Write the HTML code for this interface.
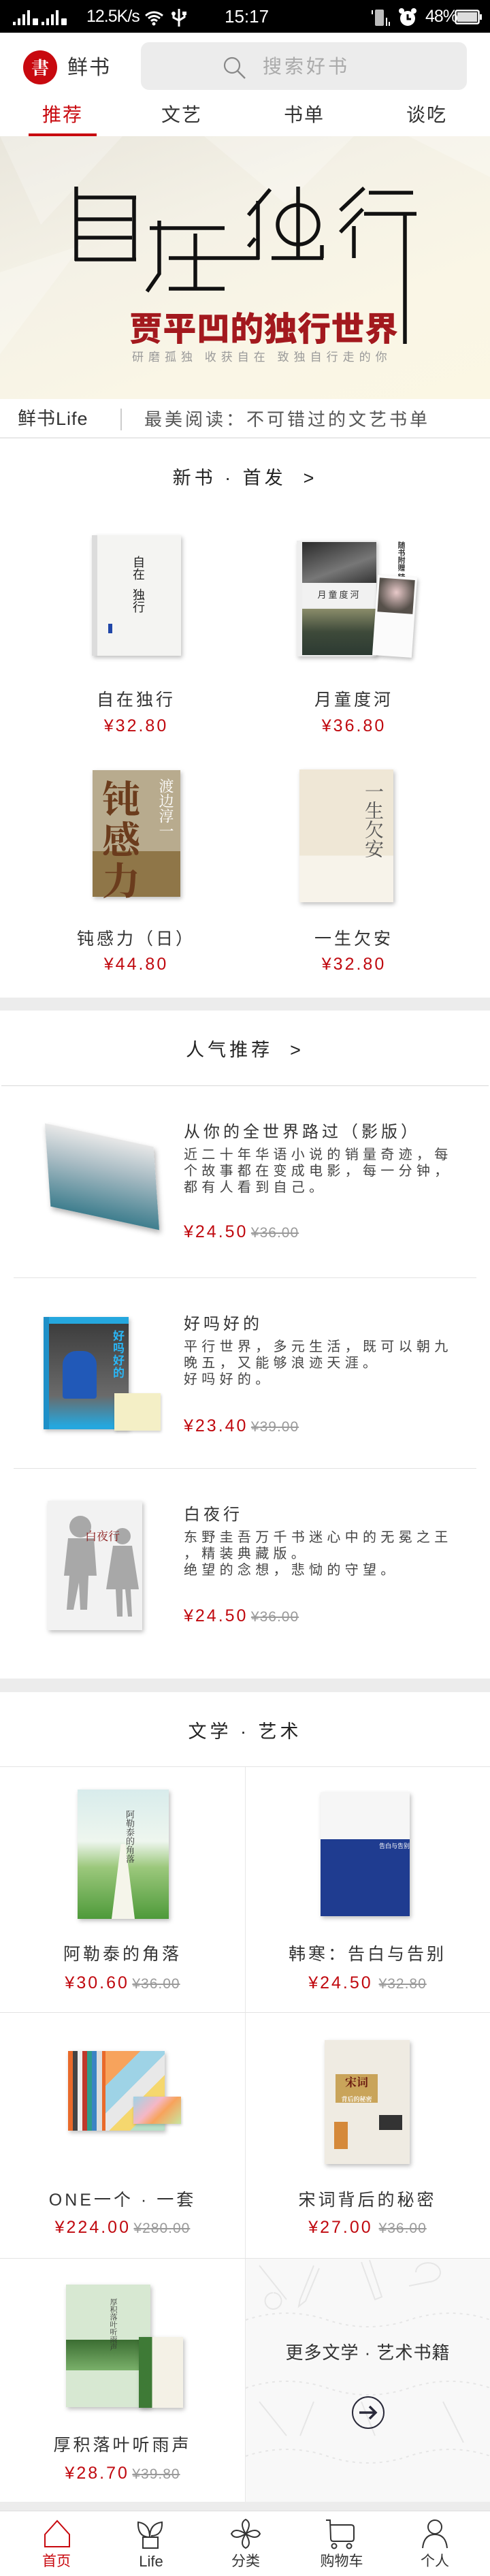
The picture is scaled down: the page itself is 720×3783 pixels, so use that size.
<!DOCTYPE html>
<html><head><meta charset="utf-8">
<style>
*{margin:0;padding:0;box-sizing:border-box}
body{width:720px;height:3783px;position:relative;background:#fff;font-family:"Liberation Sans","Noto Sans CJK SC",sans-serif;color:#333;overflow:hidden}
.a{position:absolute}
.c{position:absolute;text-align:center;white-space:nowrap}
.t{font-size:25px;letter-spacing:4px;color:#333;line-height:30px}
.p{font-size:25px;letter-spacing:3px;color:#c0090f;line-height:30px}
.o{font-size:21px;letter-spacing:1px;color:#9a9a9a;text-decoration:line-through}
.band{position:absolute;left:0;width:720px;background:#ececec}
.hl{position:absolute;height:1px;background:#e3e3e3}
.sh{font-size:27px;letter-spacing:5px;color:#222;line-height:32px}
.it{position:absolute;left:270px;width:410px}
.it .ti{font-size:24px;letter-spacing:5px;color:#333;line-height:30px;white-space:nowrap}
.it .de{font-size:20px;letter-spacing:6.3px;color:#444;line-height:24px;margin-top:6px}
.it .pr{position:absolute;left:0;white-space:nowrap}
.book{position:absolute;box-shadow:2px 3px 6px rgba(0,0,0,.25)}
</style></head><body>

<div class="a" style="left:0;top:0;width:720px;height:48px;background:#000"></div>
<svg class="a" style="left:18px;top:10px" width="110" height="30" viewBox="0 0 110 30">
<g fill="#fff"><rect x="1" y="22" width="4" height="5"/><rect x="8" y="17" width="4" height="10"/><rect x="15" y="11" width="4" height="16"/><rect x="22" y="5" width="4" height="22"/>
<rect x="30" y="17" width="8" height="10" rx="1"/>
<rect x="43" y="22" width="4" height="5"/><rect x="50" y="17" width="4" height="10"/><rect x="57" y="11" width="4" height="16"/><rect x="64" y="5" width="4" height="22"/>
<rect x="72" y="17" width="8" height="10" rx="1"/></g></svg>
<div class="a" style="left:127px;top:8px;color:#fff;font-size:25px;letter-spacing:-1px;line-height:32px">12.5K/s</div>
<svg class="a" style="left:212px;top:14px" width="30" height="24" viewBox="0 0 30 24"><g fill="none" stroke="#fff" stroke-width="3"><path d="M2 9 Q14 -1 27 9"/><path d="M6 13 Q14 6 23 13"/><path d="M10 17 Q14 13 19 17"/></g><circle cx="14" cy="21" r="2.5" fill="#fff"/></svg>
<svg class="a" style="left:252px;top:11px" width="22" height="30" viewBox="0 0 22 30"><g stroke="#fff" stroke-width="3" fill="none"><path d="M11 2 V28"/><path d="M3 10 V15 L11 19 L19 14 V9"/></g><rect x="16" y="6" width="6" height="5" fill="#fff"/><circle cx="3" cy="9" r="3" fill="#fff"/></svg>
<div class="a" style="left:330px;top:8px;color:#fff;font-size:26px;line-height:32px">15:17</div>
<svg class="a" style="left:544px;top:12px" width="32" height="28" viewBox="0 0 32 28"><rect x="7" y="2" width="13" height="24" rx="2" fill="#bbb"/><rect x="2" y="3" width="2" height="6" fill="#fff"/><rect x="23" y="14" width="2" height="12" fill="#fff"/><rect x="27" y="20" width="2" height="6" fill="#fff"/></svg>
<svg class="a" style="left:584px;top:11px" width="30" height="30" viewBox="0 0 30 30"><circle cx="15" cy="16" r="11" fill="#fff"/><path d="M15 10 V17 H20" stroke="#000" stroke-width="3" fill="none"/><circle cx="6" cy="5" r="4" fill="#fff"/><circle cx="24" cy="5" r="4" fill="#fff"/></svg>
<div class="a" style="left:625px;top:8px;color:#fff;font-size:25px;letter-spacing:-1px;line-height:32px">48%</div>
<svg class="a" style="left:668px;top:14px" width="42" height="22" viewBox="0 0 42 22"><rect x="1.5" y="1.5" width="34" height="19" rx="2" fill="none" stroke="#fff" stroke-width="2.5"/><rect x="4" y="4" width="29" height="14" fill="#ddd"/><rect x="37" y="7" width="3" height="8" fill="#fff"/></svg>

<div class="a" style="left:34px;top:74px;width:50px;height:50px;border-radius:50%;background:#c8090f;color:#fff;font-size:26px;line-height:50px;text-align:center;font-family:'Noto Serif CJK SC',serif;font-weight:bold">書</div>
<div class="a" style="left:99px;top:82px;font-size:30px;line-height:36px;color:#333;letter-spacing:2px">鲜书</div>
<div class="a" style="left:207px;top:62px;width:479px;height:70px;border-radius:12px;background:#ececec"></div>
<svg class="a" style="left:327px;top:82px" width="36" height="36" viewBox="0 0 36 36"><circle cx="14" cy="14" r="11" fill="none" stroke="#888" stroke-width="2.2"/><path d="M22 22 L33 33" stroke="#888" stroke-width="2.4"/></svg>
<div class="a" style="left:386px;top:80px;font-size:28px;line-height:36px;color:#aaa;letter-spacing:4px">搜索好书</div>

<div class="c" style="left:42px;width:100px;top:152px;font-size:28px;line-height:34px;color:#c8090f;letter-spacing:2px">推荐</div>
<div class="c" style="left:217px;width:100px;top:152px;font-size:28px;line-height:34px;color:#333;letter-spacing:2px">文艺</div>
<div class="c" style="left:397px;width:100px;top:152px;font-size:28px;line-height:34px;color:#333;letter-spacing:2px">书单</div>
<div class="c" style="left:577px;width:100px;top:152px;font-size:28px;line-height:34px;color:#333;letter-spacing:2px">谈吃</div>
<div class="a" style="left:42px;top:196px;width:100px;height:4px;background:#c8090f"></div>

<div class="a" style="left:0;top:200px;width:720px;height:386px;background:linear-gradient(160deg,#e9e6dc 0%,#f4f1e6 35%,#faf6e6 70%,#fbf7e4 100%)"></div>
<svg class="a" style="left:0;top:200px" width="720" height="386" viewBox="0 200 720 386">
<g fill="rgba(255,255,255,.25)"><polygon points="0,200 180,200 60,330"/><polygon points="300,200 520,200 420,300"/><polygon points="600,200 720,260 720,200"/><polygon points="0,400 120,360 0,520"/></g>
<g stroke="#111" stroke-width="5.5" fill="none" stroke-linecap="butt">
<path d="M112 274 V383 M110 290 H200 M197 290 V383 M112 322 H194 M112 349 H194 M110 381 H200"/>
<path d="M220 335 H330 M234 324 V402 L216 428 M248 379 H381 M287 343 V425 M248 424 H330"/>
<path d="M397 278 L365 316 M379 295 V381 M375 350 L365 362"/>
<ellipse cx="438" cy="330" rx="30" ry="29"/>
<path d="M438 274 V379 M399 379 H475 M473 360 V379"/>
<path d="M535 276 L500 309 M533 307 L500 341 M520 332 V379 M542 283 H607 M535 314 H612 M595 314 V505"/>
</g>
<text x="190" y="500" font-family="Noto Sans CJK SC, sans-serif" font-weight="900" font-size="49" fill="#a3191e" textLength="395">贾平凹的独行世界</text>
<text x="194" y="530" font-family="Noto Sans CJK SC, sans-serif" font-size="17" fill="#999" letter-spacing="7">研磨孤独  收获自在  致独自行走的你</text>
</svg>

<div class="a" style="left:0;top:586px;width:720px;height:58px;border-bottom:2px solid #e8e8e8;background:#fff"></div>
<div class="a" style="left:26px;top:599px;font-size:27px;line-height:32px;color:#333;letter-spacing:1px">鲜书Life</div>
<div class="a" style="left:177px;top:600px;width:2px;height:32px;background:#ccc"></div>
<div class="a" style="left:212px;top:600px;font-size:26px;line-height:32px;color:#555;letter-spacing:4px">最美阅读：不可错过的文艺书单</div>

<div class="c sh" style="left:0;width:720px;top:686px">新书 · 首发 &nbsp;&gt;</div>

<div class="book" style="left:135px;top:786px;width:131px;height:177px;background:linear-gradient(90deg,#dcdcdc 0 6%,#f4f4f2 6%)">
<div class="a" style="left:58px;top:30px;font-size:18px;line-height:20px;color:#222;writing-mode:vertical-rl">自在</div>
<div class="a" style="left:58px;top:78px;font-size:18px;line-height:20px;color:#222;writing-mode:vertical-rl">独行</div>
<div class="a" style="left:24px;top:130px;width:6px;height:14px;background:#2046a8"></div></div>
<div class="book" style="left:436px;top:794px;width:117px;height:170px;background:#eee">
<div class="a" style="left:8px;top:2px;width:109px;height:60px;background:linear-gradient(160deg,#2a2a2a,#777 60%,#333)"></div>
<div class="a" style="left:8px;top:62px;width:109px;height:36px;background:#f1f1f1;font-size:13px;line-height:36px;text-align:center;color:#333;letter-spacing:3px">月童度河</div>
<div class="a" style="left:8px;top:100px;width:109px;height:68px;background:linear-gradient(180deg,#8a8c6a,#3e4a3a 50%,#2c3a32)"></div></div>
<div class="a" style="left:583px;top:795px;font-size:11px;line-height:12px;color:#333;writing-mode:vertical-rl;font-weight:bold">随书附赠 精美书签</div>
<div class="book" style="left:551px;top:846px;width:58px;height:118px;background:#fbfbfb;transform:rotate(4deg)">
<div class="a" style="left:3px;top:4px;width:52px;height:50px;background:radial-gradient(circle at 50% 40%,#e8c9c9,#56504a 70%)"></div></div>

<div class="c t" style="left:100px;width:200px;top:1013px">自在独行</div>
<div class="c p" style="left:100px;width:200px;top:1051px">¥32.80</div>
<div class="c t" style="left:420px;width:200px;top:1013px">月童度河</div>
<div class="c p" style="left:420px;width:200px;top:1051px">¥36.80</div>

<div class="book" style="left:136px;top:1131px;width:129px;height:186px;background:linear-gradient(180deg,#b8ab8e 0 64%,#8f7648 64%)">
<div class="a" style="left:14px;top:10px;font-size:56px;line-height:60px;color:#6b3c1d;font-weight:bold;width:60px;font-family:'Noto Serif CJK SC',serif">钝感力</div>
<div class="a" style="left:96px;top:12px;font-size:22px;line-height:24px;color:#fff;writing-mode:vertical-rl;font-family:'Noto Serif CJK SC',serif">渡边淳一</div></div>
<div class="book" style="left:440px;top:1130px;width:138px;height:195px;background:linear-gradient(180deg,#efe7d6 0 65%,#f7f3ea 65%)">
<div class="a" style="left:94px;top:18px;font-size:28px;line-height:32px;color:#555;writing-mode:vertical-rl;font-family:'Noto Serif CJK SC',serif">一生欠安</div></div>

<div class="c t" style="left:100px;width:200px;top:1364px">钝感力（日）</div>
<div class="c p" style="left:100px;width:200px;top:1401px">¥44.80</div>
<div class="c t" style="left:420px;width:200px;top:1364px">一生欠安</div>
<div class="c p" style="left:420px;width:200px;top:1401px">¥32.80</div>

<div class="band" style="top:1465px;height:19px"></div>
<div class="c sh" style="left:0;width:720px;top:1526px">人气推荐 &nbsp;&gt;</div>
<div class="hl" style="left:2px;width:716px;top:1594px;background:#d8d8d8"></div>

<div class="a" style="left:70px;top:1668px;width:160px;height:120px;background:linear-gradient(180deg,#e8e8e8,#a9bcc4 40%,#3f7e8e);transform:skewY(16deg) rotate(-4deg);box-shadow:2px 4px 8px rgba(0,0,0,.3)"></div>
<div class="it" style="top:1648px"><div class="ti">从你的全世界路过（影版）</div>
<div class="de">近二十年华语小说的销量奇迹，每个故事都在变成电影，每一分钟，都有人看到自己。</div>
<div class="pr" style="top:146px"><span class="p">¥24.50</span> <span class="o">¥36.00</span></div></div>
<div class="hl" style="left:20px;width:680px;top:1876px"></div>

<div class="book" style="left:64px;top:1934px;width:125px;height:165px;background:linear-gradient(180deg,#25a7de 0 6%,#3d3d3d 6%,#6a6a6a 70%,#25a7de 97%);border-left:8px solid #1e90c8">
<div class="a" style="left:94px;top:20px;font-size:17px;line-height:18px;color:#29b6f6;width:20px;font-weight:bold">好吗好的</div>
<div class="a" style="left:20px;top:50px;width:50px;height:70px;background:#2159b8;border-radius:20px 20px 4px 4px"></div></div>
<div class="a" style="left:168px;top:2046px;width:68px;height:55px;background:#f4efc6;box-shadow:1px 2px 4px rgba(0,0,0,.2)"></div>
<div class="it" style="top:1930px"><div class="ti">好吗好的</div>
<div class="de">平行世界，多元生活，既可以朝九晚五，又能够浪迹天涯。<br>好吗好的。</div>
<div class="pr" style="top:149px"><span class="p">¥23.40</span> <span class="o">¥39.00</span></div></div>
<div class="hl" style="left:20px;width:680px;top:2156px"></div>

<div class="book" style="left:70px;top:2204px;width:139px;height:190px;background:#f2f2f2">
<svg class="a" style="left:10px;top:10px" width="125" height="170" viewBox="0 0 125 170"><g fill="#a8a8a8"><circle cx="38" cy="28" r="16"/><path d="M20 45 H58 L62 100 L50 100 L48 150 L38 150 L36 110 L28 150 L18 150 L22 100 L14 100 Z"/><circle cx="100" cy="42" r="12"/><path d="M86 56 H114 L124 120 H76 Z M90 120 L92 160 H100 L100 120 M104 120 L108 160 H114 L112 120"/></g></svg>
<div class="a" style="left:55px;top:38px;font-size:17px;color:#8a1a1a;font-family:'Noto Serif CJK SC',serif">白夜行</div></div>
<div class="it" style="top:2210px"><div class="ti">白夜行</div>
<div class="de">东野圭吾万千书迷心中的无冕之王<br>，精装典藏版。<br>绝望的念想，悲恸的守望。</div>
<div class="pr" style="top:148px"><span class="p">¥24.50</span> <span class="o">¥36.00</span></div></div>

<div class="band" style="top:2465px;height:20px"></div>
<div class="c sh" style="left:0;width:720px;top:2527px">文学 · 艺术</div>
<div class="hl" style="left:0;width:720px;top:2594px"></div>
<div class="a" style="left:360px;top:2595px;width:1px;height:1080px;background:#e8e8e8"></div>
<div class="hl" style="left:0;width:720px;top:2955px"></div>
<div class="hl" style="left:0;width:720px;top:3316px"></div>

<div class="book" style="left:114px;top:2628px;width:134px;height:190px;background:linear-gradient(180deg,#d8ecec 0,#eef6ee 40%,#9cc87c 60%,#4e9a3a 100%)">
<div class="a" style="left:50px;top:80px;width:34px;height:110px;background:#f5f5ea;clip-path:polygon(40% 0,60% 0,100% 100%,0 100%)"></div>
<div class="a" style="left:70px;top:30px;font-size:13px;line-height:14px;color:#333;writing-mode:vertical-rl;font-family:'Noto Serif CJK SC',serif">阿勒泰的角落</div></div>
<div class="book" style="left:471px;top:2632px;width:131px;height:182px;background:linear-gradient(180deg,#f6f6f6 0 38%,#1f3c90 38%)">
<div class="a" style="left:86px;top:72px;font-size:9px;color:#fff">告白与告别</div></div>
<div class="c t" style="left:40px;width:280px;top:2855px">阿勒泰的角落</div>
<div class="c" style="left:40px;width:280px;top:2897px"><span class="p">¥30.60</span> <span class="o">¥36.00</span></div>
<div class="c t" style="left:400px;width:280px;top:2855px">韩寒：告白与告别</div>
<div class="c" style="left:400px;width:280px;top:2897px"><span class="p">¥24.50</span> &nbsp;<span class="o">¥32.80</span></div>

<div class="a" style="left:100px;top:3012px;width:142px;height:117px;background:repeating-linear-gradient(90deg,#e96a2a 0 7px,#444 7px 14px,#eee 14px 21px,#c0392b 21px 28px,#2e9c8a 28px 35px,#3b84c4 35px 42px,#ddd 42px 50px);box-shadow:2px 3px 6px rgba(0,0,0,.25)"></div>
<div class="a" style="left:155px;top:3012px;width:87px;height:117px;background:linear-gradient(135deg,#f7a35c 0 25%,#9ed3e6 25% 45%,#e8e8e8 45% 60%,#f5d76e 60% 75%,#b8e0c8 75%)"></div>
<div class="a" style="left:196px;top:3079px;width:70px;height:40px;background:linear-gradient(135deg,#9ed3e6,#f5b7c5 40%,#f7a35c 60%,#c8e6a0);box-shadow:1px 2px 4px rgba(0,0,0,.2)"></div>
<div class="book" style="left:477px;top:2996px;width:125px;height:182px;background:#efebe2">
<div class="a" style="left:16px;top:50px;width:62px;height:42px;background:#c9a45a;font-size:17px;line-height:22px;color:#6b1a10;text-align:center;font-weight:bold;font-family:'Noto Serif CJK SC',serif">宋词<br><span style="font-size:9px;color:#fff">背后的秘密</span></div>
<div class="a" style="left:14px;top:120px;width:20px;height:40px;background:#d5893a"></div>
<div class="a" style="left:80px;top:110px;width:34px;height:22px;background:#333"></div></div>
<div class="c t" style="left:40px;width:280px;top:3216px">ONE一个 · 一套</div>
<div class="c" style="left:40px;width:280px;top:3256px"><span class="p">¥224.00</span> <span class="o">¥280.00</span></div>
<div class="c t" style="left:400px;width:280px;top:3216px">宋词背后的秘密</div>
<div class="c" style="left:400px;width:280px;top:3256px"><span class="p">¥27.00</span> &nbsp;<span class="o">¥36.00</span></div>

<div class="book" style="left:97px;top:3355px;width:124px;height:180px;background:linear-gradient(180deg,#d7e8d2 0 45%,#3b6d32 45%,#7ab06a 70%,#d7e8d2 70%)">
<div class="a" style="left:64px;top:20px;font-size:11px;line-height:12px;color:#333;writing-mode:vertical-rl;font-family:'Noto Serif CJK SC',serif">厚积落叶听雨声</div></div>
<div class="book" style="left:204px;top:3432px;width:65px;height:104px;background:linear-gradient(90deg,#3e7a36 0 30%,#f4f1e6 30%)"></div>
<div class="c t" style="left:40px;width:280px;top:3576px">厚积落叶听雨声</div>
<div class="c" style="left:40px;width:280px;top:3617px"><span class="p">¥28.70</span> <span class="o">¥39.80</span></div>

<div class="a" style="left:361px;top:3317px;width:359px;height:357px;background:#f8f8f8"></div>
<svg class="a" style="left:361px;top:3317px" width="359" height="357" viewBox="0 0 359 357"><g fill="none" stroke="#e6e6e6" stroke-width="2">
<path d="M20 10 L60 60 M40 50 a12 12 0 1 0 1 0"/><path d="M100 10 L80 60 L78 70 L88 62 L108 14"/><path d="M170 5 L190 60 L200 56 L182 2"/><path d="M250 20 a18 14 0 1 1 20 14 L240 40"/>
<path d="M0 90 Q60 70 120 90 T240 90 T360 90" stroke-dasharray="4 6"/><path d="M0 190 Q60 170 120 190 T240 190 T360 190" stroke-dasharray="4 6"/><path d="M0 290 Q60 270 120 290 T240 290 T360 290" stroke-dasharray="4 6"/>
<path d="M20 210 L60 260 M100 210 L80 260 M170 210 L190 260 M290 210 L320 270"/></g></svg>
<div class="c" style="left:361px;width:359px;top:3438px;font-size:26px;line-height:34px;color:#333;letter-spacing:1px">更多文学 · 艺术书籍</div>
<svg class="a" style="left:516px;top:3518px" width="50" height="50" viewBox="0 0 50 50"><circle cx="25" cy="25" r="23" fill="none" stroke="#2a2a3a" stroke-width="2"/><path d="M12 25 H36 M27 16 L36 25 L27 34" fill="none" stroke="#2a2a3a" stroke-width="3.5"/></svg>

<div class="band" style="top:3674px;height:13px"></div>
<div class="a" style="left:0;top:3687px;width:720px;height:96px;background:#fff;border-top:1px solid #ddd"></div>
<svg class="a" style="left:60px;top:3700px" width="48" height="44" viewBox="0 0 48 44"><path d="M6 22 L24 2 L42 22 V40 H6 Z" fill="none" stroke="#c8090f" stroke-width="2"/></svg>
<svg class="a" style="left:198px;top:3700px" width="48" height="44" viewBox="0 0 48 44"><g fill="none" stroke="#333" stroke-width="2"><path d="M22 26 Q4 26 5 4 Q22 6 22 26 Q22 6 40 4 Q41 24 24 24"/><rect x="12" y="26" width="22" height="16"/></g></svg>
<svg class="a" style="left:337px;top:3697px" width="48" height="48" viewBox="0 0 48 48"><g fill="none" stroke="#333" stroke-width="2"><path d="M24 24 Q14 8 24 3 Q34 8 24 24 Q40 14 45 24 Q40 34 24 24 Q34 40 24 45 Q14 40 24 24 Q8 34 3 24 Q8 14 24 24"/></g></svg>
<svg class="a" style="left:477px;top:3698px" width="50" height="46" viewBox="0 0 50 46"><g fill="none" stroke="#333" stroke-width="2"><path d="M2 3 H8 L9 30 Q9 34 13 34 H39 Q43 34 43 30 V14 Q43 10 39 10 H8"/><circle cx="14" cy="41" r="3.5"/><circle cx="36" cy="41" r="3.5"/></g></svg>
<svg class="a" style="left:615px;top:3698px" width="48" height="46" viewBox="0 0 48 46"><g fill="none" stroke="#333" stroke-width="2"><circle cx="24" cy="13" r="10"/><path d="M6 44 Q8 24 24 24 Q40 24 42 44"/></g></svg>
<div class="c" style="left:33px;width:100px;top:3748px;font-size:21px;line-height:28px;color:#c8090f">首页</div>
<div class="c" style="left:172px;width:100px;top:3748px;font-size:22px;line-height:28px;color:#333">Life</div>
<div class="c" style="left:311px;width:100px;top:3748px;font-size:21px;line-height:28px;color:#333">分类</div>
<div class="c" style="left:452px;width:100px;top:3748px;font-size:21px;line-height:28px;color:#333">购物车</div>
<div class="c" style="left:589px;width:100px;top:3748px;font-size:21px;line-height:28px;color:#333">个人</div>
</body></html>
